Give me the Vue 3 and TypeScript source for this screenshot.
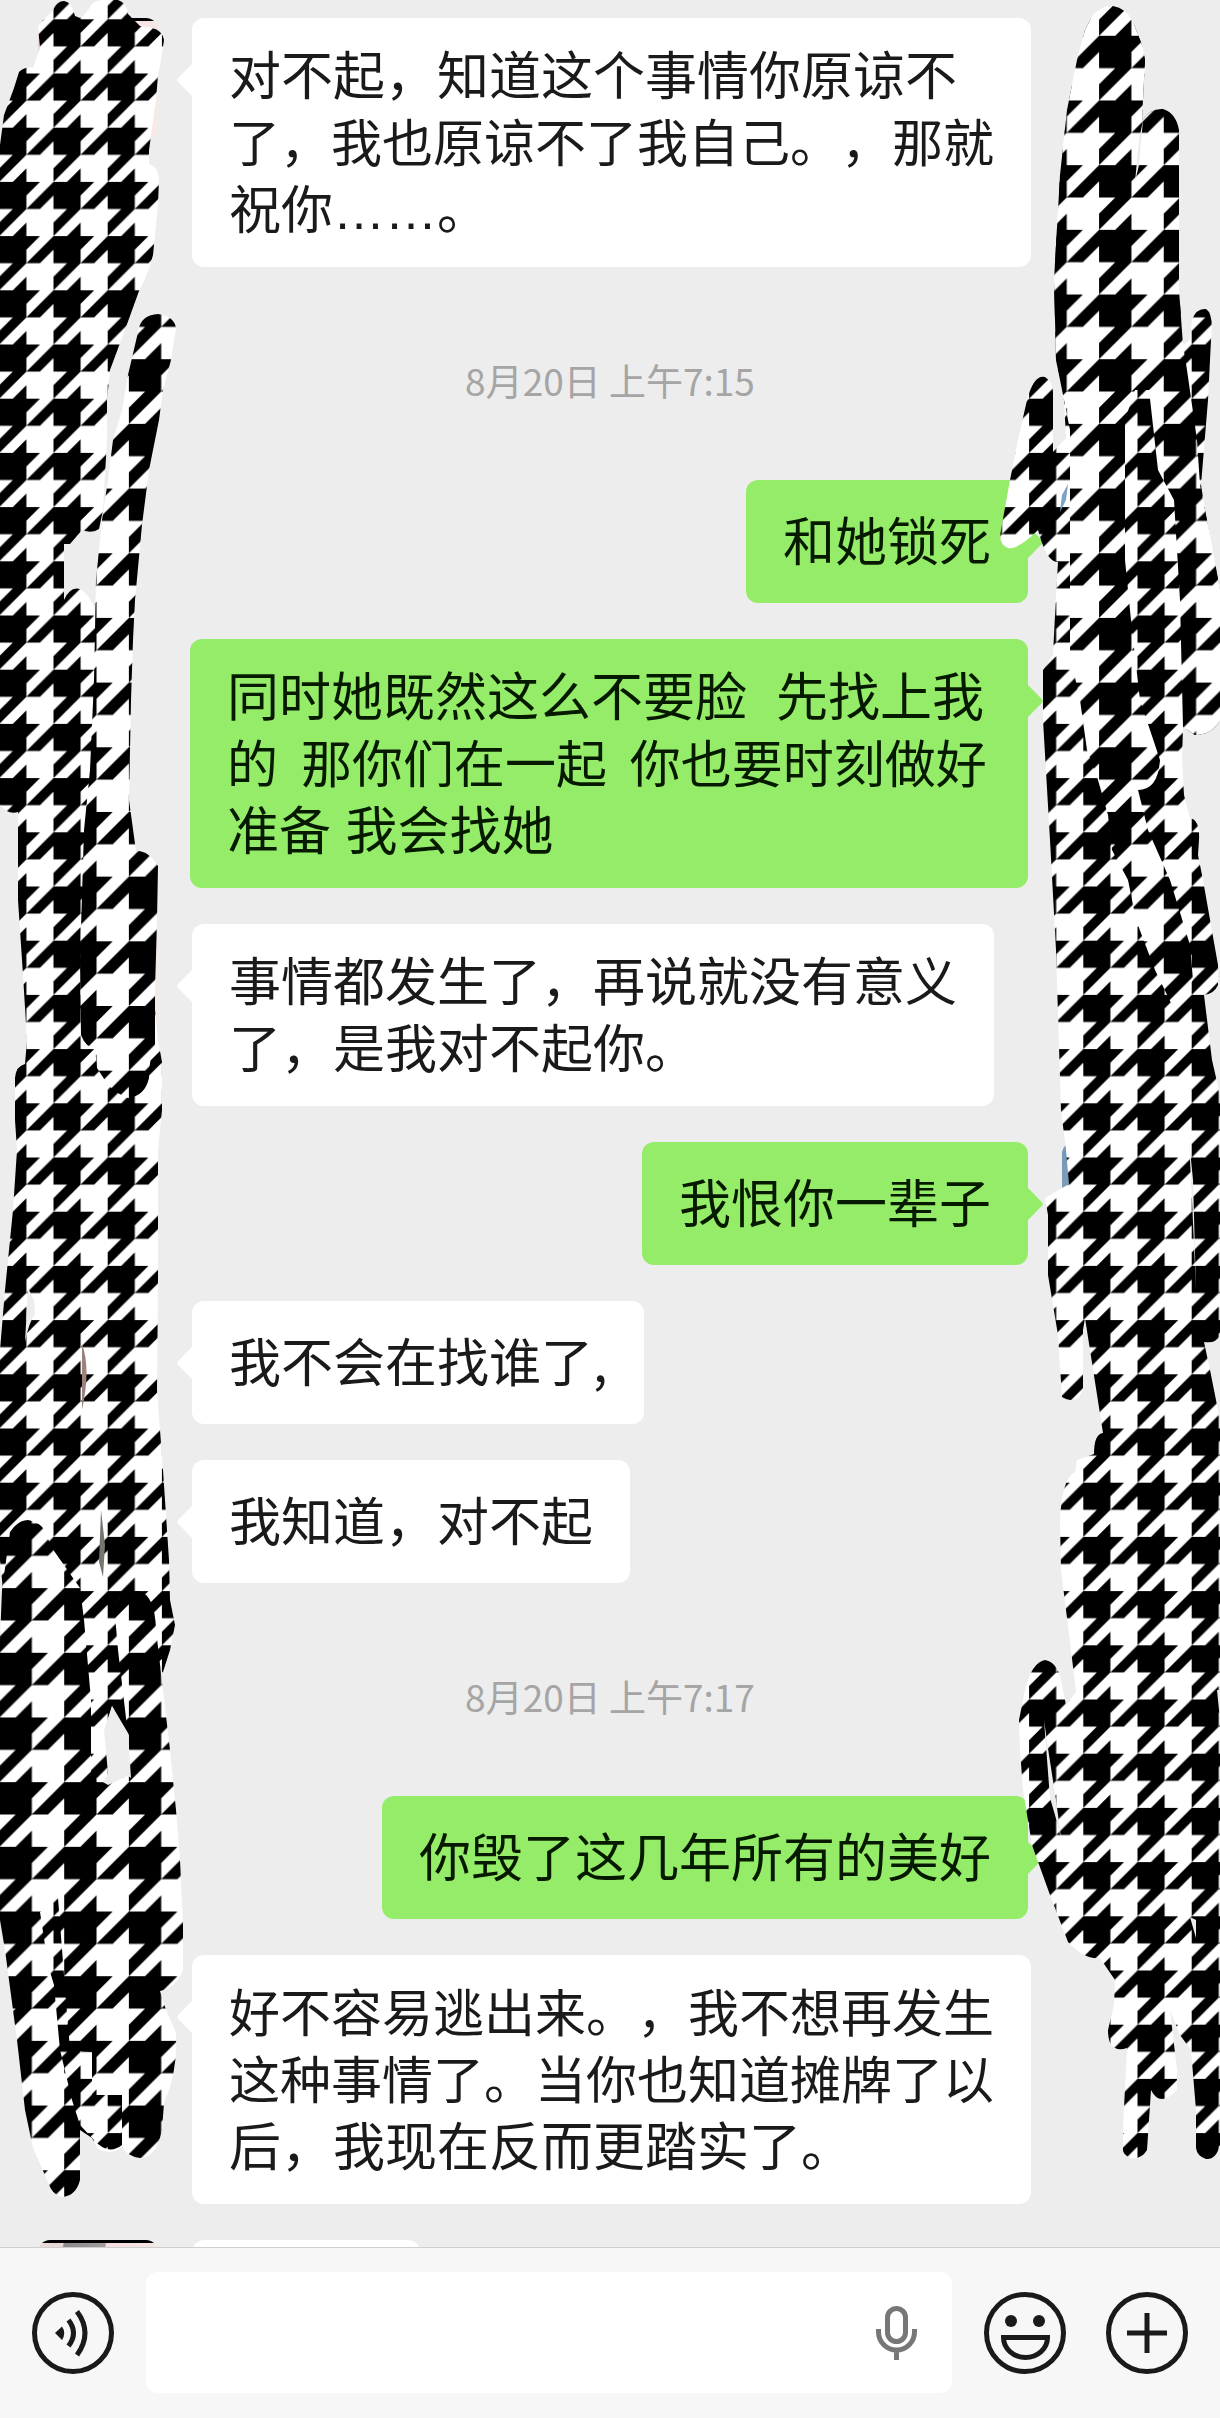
<script setup lang="ts">
import { ref } from 'vue'

interface Line {
  text: string
  tight?: boolean
}

interface Entry {
  id: number
  kind: 'in' | 'out' | 'time'
  wide?: boolean
  lines: Line[]
}

const draft = ref('')

const entries: Entry[] = [
  {
    id: 1,
    kind: 'in',
    lines: [
      { text: '对不起，知道这个事情你原谅不' },
      { text: '了，我也原谅不了我自己。，那就', tight: true },
      { text: '祝你……。' },
    ],
  },
  { id: 2, kind: 'time', lines: [{ text: '8月20日 上午7:15' }] },
  { id: 3, kind: 'out', lines: [{ text: '和她锁死' }] },
  {
    id: 4,
    kind: 'out',
    wide: true,
    lines: [
      { text: '同时她既然这么不要脸  先找上我' },
      { text: '的  那你们在一起  你也要时刻做好', tight: true },
      { text: '准备 我会找她' },
    ],
  },
  {
    id: 5,
    kind: 'in',
    lines: [{ text: '事情都发生了，再说就没有意义' }, { text: '了，是我对不起你。' }],
  },
  { id: 6, kind: 'out', lines: [{ text: '我恨你一辈子' }] },
  { id: 7, kind: 'in', lines: [{ text: '我不会在找谁了,' }] },
  { id: 8, kind: 'in', lines: [{ text: '我知道，对不起' }] },
  { id: 9, kind: 'time', lines: [{ text: '8月20日 上午7:17' }] },
  { id: 10, kind: 'out', lines: [{ text: '你毁了这几年所有的美好' }] },
  {
    id: 11,
    kind: 'in',
    lines: [
      { text: '好不容易逃出来。，我不想再发生', tight: true },
      { text: '这种事情了。当你也知道摊牌了以', tight: true },
      { text: '后，我现在反而更踏实了。' },
    ],
  },
  { id: 12, kind: 'in', lines: [] },
]

// Odd runs (narrow spaces on tight lines, commas elsewhere) use the CJK face.
function runs(line: Line): string[] {
  return line.text.split(line.tight ? /(\s+)/ : /(,)/).filter((run) => run !== '')
}
</script>

<template>
  <div class="page">
    <main class="chat">
      <template v-for="entry in entries" :key="entry.id">
        <time v-if="entry.kind === 'time'" class="stamp">{{ entry.lines[0].text }}</time>
        <div v-else class="row" :class="entry.kind">
          <span class="avatar"></span>
          <p class="bubble" :class="{ blank: entry.lines.length === 0, wide: entry.wide }">
            <span
              v-for="(line, i) in entry.lines"
              :key="i"
              class="line"
              :class="{ tight: line.tight }"
            ><template v-for="(run, j) in runs(line)" :key="j"><span v-if="j % 2 === 1" class="cjk">{{ run }}</span><template v-else>{{ run }}</template></template></span>
          </p>
        </div>
      </template>

      <svg class="scribble left" width="190" height="2247" viewBox="0 0 190 2247" aria-hidden="true">
        <defs>
          <pattern id="tooth-small" width="4" height="4" patternUnits="userSpaceOnUse" patternTransform="translate(53.5 73.5) scale(13.55)">
            <rect width="4" height="4" fill="#fff" />
            <path d="M0 0H3L2 1V2H0ZM4 0L2 2H3L4 1ZM1 2H2L0 4V3ZM2 3V4H1Z" />
          </pattern>
          <pattern id="tooth-large" width="4" height="4" patternUnits="userSpaceOnUse" patternTransform="translate(64.2 35.8) scale(16.17)">
            <rect width="4" height="4" fill="#fff" />
            <path d="M0 0H3L2 1V2H0ZM4 0L2 2H3L4 1ZM1 2H2L0 4V3ZM2 3V4H1Z" />
          </pattern>
        </defs>
        <path
          fill="url(#tooth-small)"
          d="M53 10Q57 1 64 1Q72 2 75 16L80 18Q86 14 92 4Q97 0 104 0H118Q127 3 128 14L140 26L152 28Q162 30 164 40L161 60L158 75L156 100L149 150V164Q157 166 159 178L158 205L153 255Q148 275 139 291L126 327L110 370L107 400V440L103 510L99 529Q92 534 82 530L70 544H64V600Q70 586 80 589Q90 594 95 610L100 850L105 1000L155 1010L158 1040L162 1062V1110L158 1150V1280L157 1390L163 1470L169 1560L170 1600L175 1625L170 1650L163 1672L140 1700L128 1735L112 1706L104 1730L108 1773L95 1800H0V1650L3 1590L0 1560V1350L5 1290L13 1210L17 1150L15 1120V1078Q16 1066 25 1064L27 1040L23 975L18 900V812Q8 815 0 805V145L4 115L14 88L19 72Q25 66 33 68L40 48L38 26Z"
        />
        <path
          fill="url(#tooth-large)"
          d="M139 328Q142 315 158 314Q174 316 176 328L171 360L163 390L159 420L149 470L142 525L135 600L133 640L131 700L129 800Q132 822 136 851Q148 850 158 866L157 920L155 990L155 1045Q149 1058 149 1078Q145 1096 128 1098Q117 1094 108 1085L97 1068L95 1048Q86 1048 81 1035L80 960L84 830L90 770L94 680L96 580L102 520L108 480L113 440L122 410L128 375Z"
        />
        <path
          fill="url(#tooth-large)"
          d="M10 1532Q18 1520 28 1520Q40 1522 44 1530L52 1548L80 1588L84 1620L91 1700V1775L108 1785L130 1775L128 1735L118 1650L114 1604Q124 1590 138 1591Q155 1594 156 1630L163 1690L170 1750L176 1810L180 1860L183 1925V1970Q176 1988 160 1991L166 2010L176 2033Q178 2072 164 2103L162 2130Q156 2158 140 2158Q126 2156 122 2146Q113 2156 98 2149L92 2138L80 2130V2180Q76 2196 62 2197Q52 2195 48 2182L33 2148L25 2110L17 2040L5 1950L0 1920V1640L2 1590Z"
        />
        <path fill="url(#tooth-small)" d="M40 1912L58 1898L64 1975L70 2050L92 2052V2095H122V2145Q108 2156 94 2140L80 2125L72 2100L60 2050L54 1985L48 1965Z" />
        <path fill="#ededed" d="M112 1706L128 1733L131 1778Q122 1770 109 1774Q103 1735 112 1706ZM28 1288L34 1300L35 1314Q29 1322 25 1342Z" />
        <path fill="#9c827b" d="M82 1344Q91 1368 82 1410Z" />
        <path fill="#77756d" d="M101 1510L105 1545L103 1577L99 1562Z" />
      </svg>

      <svg class="scribble right" width="220" height="2247" viewBox="1000 0 220 2247" aria-hidden="true">
        <path
          fill="url(#tooth-small)"
          d="M1093 15Q1102 6 1113 6Q1126 8 1133 22L1142 45L1145 60L1142 120Q1151 108 1163 109Q1176 113 1179 130V290L1183 345L1190 340L1192 320Q1196 308 1206 309Q1214 314 1211 340L1208 400L1201 485L1205 510L1212 550L1220 590V720Q1212 735 1195 735L1183 727L1182 760L1184 795L1190 818Q1200 820 1199 840L1198 855L1203 880L1218 965V985Q1214 994 1204 995L1212 1060L1220 1095V1335Q1216 1344 1204 1342L1210 1370L1220 1420V2145Q1216 2160 1206 2159Q1197 2156 1196 2148V2110L1191 2050L1180 2035L1170 2010L1177 2070V2090Q1160 2108 1151 2090L1147 2150Q1141 2160 1130 2158Q1122 2154 1123 2148V2128L1127 2048Q1108 2054 1108 2030L1114 2005L1115 1980L1100 1958Q1085 1960 1068 1942L1050 1895L1032 1845L1023 1790L1020 1750L1019 1720L1025 1690Q1032 1662 1045 1660Q1057 1662 1061 1680L1066 1705L1076 1692L1071 1650L1061 1570L1060 1520Q1062 1478 1075 1472L1077 1460L1094 1454Q1094 1434 1103 1433L1090 1350L1085 1318L1083 1330V1390Q1076 1406 1062 1397L1058 1335L1048 1275V1215L1045 1198L1069 1184L1066 1150L1061 1110L1056 950L1050 840L1043 720V670L1053 655L1055 615L1058 562Q1048 562 1041 540L1038 530Q1018 550 1008 548Q998 544 1001 530L1010 480L1018 440L1027 400Q1034 374 1045 377Q1053 382 1053 392V452L1066 438L1064 400L1056 360L1054 280L1060 175L1067 110L1077 60L1085 30Z"
        />
        <path
          fill="url(#tooth-large)"
          d="M1093 15Q1102 6 1113 6Q1126 8 1133 22L1142 45L1145 60L1142 120Q1151 108 1163 109Q1176 113 1179 130V290L1183 345L1187 370L1197 440L1200 485L1211 540L1220 590V720Q1212 735 1195 735L1183 727L1180 600L1174 500L1158 470L1149 390L1135 390L1125 420V560L1132 630L1140 700L1160 760Q1158 790 1138 790L1148 830L1170 880L1190 945L1193 980L1172 1005L1155 970L1136 920L1128 880L1112 850L1108 815L1098 780L1087 750L1080 700L1070 655V430L1064 400L1056 360L1054 280L1060 175L1067 110L1077 60L1085 30Z"
        />
        <path fill="#ededed" d="M1143 120L1139 140L1135 182L1139 165ZM1044 1720L1049 1755L1056 1800L1061 1838L1055 1815L1050 1798ZM1189 1140L1193 1180L1196 1290L1192 1200ZM1190 1917L1196 1920V1938ZM1217 1690L1220 1720V1690Z" />
        <path fill="#7ea3c4" d="M1068 484L1066 500L1060 512L1062 495Z" />
      </svg>
    </main>

    <form class="composer" @submit.prevent>
      <button type="button" class="tool voice" aria-label="语音">
        <svg width="82" height="82" viewBox="0 0 82 82" fill="none" stroke="#1a1a1a" stroke-width="5">
          <circle cx="41" cy="41" r="38.5" />
          <path d="M36.5 28Q46.5 41 36.5 54M45 19.5Q61 41 45 63" />
          <path d="M23 41L30 34.5Q34.5 41 30 48Z" fill="#1a1a1a" stroke="none" />
        </svg>
      </button>
      <div class="field">
        <input v-model="draft" type="text" aria-label="消息" />
        <button type="button" class="mic" aria-label="语音输入">
          <svg width="41" height="54" viewBox="0 0 41 54" fill="none" stroke="#777" stroke-width="5">
            <rect x="11.5" y="2.5" width="18" height="33" rx="9" />
            <path d="M2.5 23V26A18 18 0 0 0 38.5 26V23M20.5 44V54" />
          </svg>
        </button>
      </div>
      <button type="button" class="tool emoji" aria-label="表情">
        <svg width="82" height="82" viewBox="0 0 82 82" fill="none" stroke="#1a1a1a" stroke-width="5">
          <circle cx="41" cy="41" r="38.5" />
          <path d="M19.5 45.5H63.5A22 20 0 0 1 19.5 45.5Z" />
          <g fill="#1a1a1a" stroke="none">
            <circle cx="27" cy="29" r="6" />
            <circle cx="55" cy="29" r="6" />
          </g>
        </svg>
      </button>
      <button type="button" class="tool more" aria-label="更多">
        <svg width="82" height="82" viewBox="0 0 82 82" fill="none" stroke="#1a1a1a" stroke-width="5">
          <circle cx="41" cy="41" r="38.5" />
          <path d="M41 21V61M21 41H61" />
        </svg>
      </button>
    </form>
  </div>
</template>

<style>
body {
  margin: 0;
  background: #ededed;
}
</style>

<style scoped>
.page {
  display: flex;
  flex-direction: column;
  height: 100vh;
  overflow: hidden;
  background: #ededed;
  font-family: "Liberation Sans", "Noto Sans CJK SC", sans-serif;
  color: #1a1a1a;
}

.chat {
  position: relative;
  flex: 1;
  min-height: 0;
  overflow: hidden;
  display: flex;
  flex-direction: column;
  gap: 36px;
  padding: 18px 38px 0;
}

.stamp {
  flex-shrink: 0;
  box-sizing: border-box;
  height: 141px;
  padding-top: 16px;
  line-height: 123px;
  text-align: center;
  font-family: "Noto Sans CJK SC", sans-serif;
  font-size: 37px;
  color: #a5a5a5;
}

.row {
  flex-shrink: 0;
  display: flex;
  align-items: flex-start;
  gap: 34px;
}

.row.out {
  flex-direction: row-reverse;
}

.avatar {
  flex: none;
  width: 120px;
  height: 120px;
  border-radius: 12px;
  background:
    linear-gradient(#000 3px, transparent 3px),
    linear-gradient(100deg, #e9d9d6 18%, #8d8989 19%, #a29d9d 48%, #f3dfdf 49%, #f8eae4 100%);
}

.out .avatar {
  background: linear-gradient(#7396b8, #8fa9b6);
}

.bubble {
  position: relative;
  box-sizing: border-box;
  display: flex;
  flex-direction: column;
  justify-content: center;
  min-height: 123px;
  margin: 0;
  padding: 26px 37px 22px;
  border-radius: 12px;
  background: #fff;
  font-size: 52px;
  line-height: 67px;
}

.bubble::before {
  content: "";
  position: absolute;
  top: 46px;
  right: 100%;
  width: 15px;
  height: 32px;
  background: inherit;
  clip-path: polygon(100% 0, 100% 100%, 8% 56%, 0 50%, 8% 44%);
}

.out .bubble {
  background: #95ec69;
  color: #061a00;
}

.out .bubble::before {
  right: auto;
  left: 100%;
  clip-path: polygon(0 0, 0 100%, 92% 56%, 100% 50%, 92% 44%);
}

.bubble.wide {
  width: 838px;
}

.bubble.blank {
  width: 228px;
}

.line {
  white-space: pre;
  text-spacing-trim: space-all;
}

.line.tight {
  font-size: 51px;
}

.cjk {
  font-family: "Noto Sans CJK SC", sans-serif;
  line-height: 1;
}

.scribble {
  position: absolute;
  top: 0;
  pointer-events: none;
}

.scribble.left {
  left: 0;
}

.scribble.right {
  right: 0;
}

.composer {
  flex-shrink: 0;
  display: flex;
  align-items: center;
  gap: 32px;
  padding: 24px 32px 25px;
  border-top: 1px solid #cfcfcf;
  background: #f7f7f7;
}

.tool,
.mic {
  flex: none;
  display: block;
  padding: 0;
  border: 0;
  background: none;
}

.tool svg,
.mic svg {
  display: block;
}

.more {
  margin-left: 8px;
}

.field {
  flex: 1;
  display: flex;
  align-items: center;
  height: 121px;
  padding: 0 35px;
  border-radius: 12px;
  background: #fff;
}

.field input {
  flex: 1;
  min-width: 0;
  height: 80px;
  padding: 0;
  border: 0;
  outline: 0;
  background: transparent;
  font: inherit;
  font-size: 52px;
}
</style>
